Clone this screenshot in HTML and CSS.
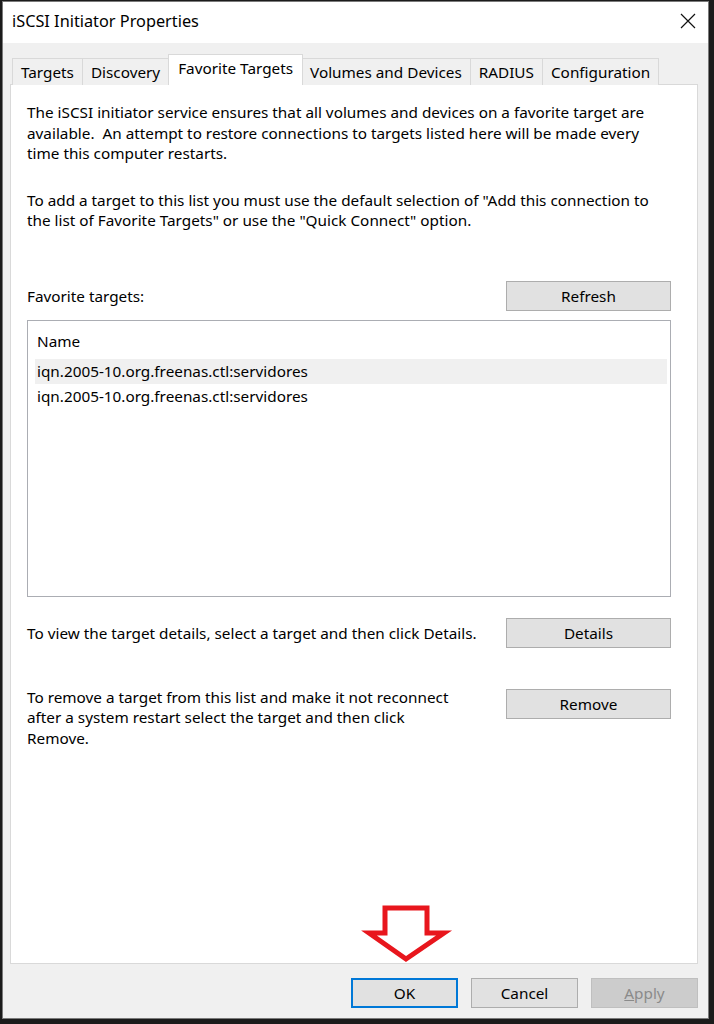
FILE: index.html
```html
<!DOCTYPE html>
<html>
<head>
<meta charset="utf-8">
<link rel="stylesheet" href="styles.css">
</head>
<body>
<div class="window">
  <div class="titlebar">
    <span class="title">iSCSI Initiator Properties</span>
    <svg class="close" width="16" height="16" viewBox="0 0 16 16"><path d="M1 1L15 15M15 1L1 15" stroke="#111" stroke-width="1.2" fill="none"/></svg>
  </div>
  <div class="content">
    <div class="tabs">
      <div class="tab">Targets</div>
      <div class="tab">Discovery</div>
      <div class="tab active">Favorite Targets</div>
      <div class="tab">Volumes and Devices</div>
      <div class="tab">RADIUS</div>
      <div class="tab">Configuration</div>
    </div>
    <div class="panel">
      <p class="para">The iSCSI initiator service ensures that all volumes and devices on a favorite target are<br>available.&nbsp; An attempt to restore connections to targets listed here will be made every<br>time this computer restarts.</p>
      <p class="para second">To add a target to this list you must use the default selection of "Add this connection to<br>the list of Favorite Targets" or use the "Quick Connect" option.</p>
      <div class="row first-row">
        <span class="label">Favorite targets:</span>
        <button class="btn">Refresh</button>
      </div>
      <div class="list">
        <div class="list-head">Name</div>
        <div class="list-item selected">iqn.2005-10.org.freenas.ctl:servidores</div>
        <div class="list-item">iqn.2005-10.org.freenas.ctl:servidores</div>
      </div>
      <div class="row details-row">
        <span class="label">To view the target details, select a target and then click Details.</span>
        <button class="btn">Details</button>
      </div>
      <div class="row remove-row">
        <span class="label wrap">To remove a target from this list and make it not reconnect<br>after a system restart select the target and then click<br>Remove.</span>
        <button class="btn">Remove</button>
      </div>
    </div>
    <div class="footer">
      <button class="btn fbtn default">OK</button>
      <button class="btn fbtn">Cancel</button>
      <button class="btn fbtn disabled"><u>A</u>pply</button>
    </div>
  </div>
</div>
<svg class="arrow" width="94" height="66" viewBox="0 0 94 66">
  <polygon points="24,5 66,5 66,30 83,30 45,56 8,30 24,30" fill="#fff" stroke="#e8161d" stroke-width="5" stroke-linejoin="miter"/>
</svg>
</body>
</html>
```
FILE: styles.css
```css
*, *::before, *::after {
  box-sizing: border-box;
}
html, body {
  margin: 0;
  padding: 0;
}
body {
  background: #1b1b1b;
  width: 714px;
  height: 1024px;
  overflow: hidden;
  position: relative;
  font-family: "Noto Sans", "Open Sans", sans-serif;
  font-size: 15.3px;
  color: #000;
}
.window {
  margin: 1px 0 0 2px;
  width: 707px;
  height: 1018px;
  border: 1px solid #7a7a7a;
  background: #f0f0f0;
  display: flex;
  flex-direction: column;
}
.titlebar {
  height: 41px;
  background: #fff;
  display: flex;
  align-items: center;
  justify-content: space-between;
  padding: 0 12px 0 9px;
  flex: none;
}
.title {
  font-size: 16.3px;
  margin-top: -3px;
}
.close {
  margin-top: -3px;
}
.content {
  padding: 0 10px 0 7px;
  display: flex;
  flex-direction: column;
}
.tabs {
  display: flex;
  align-items: flex-end;
  margin-top: 11px;
  height: 31px;
  padding-left: 3px;
  position: relative;
  z-index: 1;
  margin-bottom: -1px;
}
.tab {
  height: 27px;
  line-height: 26px;
  border: 1px solid #d9d9d9;
  border-bottom: none;
  margin-left: -1px;
  padding: 0 8px;
  background: #f0f0f0;
  white-space: nowrap;
}
.tab.active {
  height: 31px;
  line-height: 27px;
  background: #fff;
  padding: 0 9px;
  margin-left: -1px;
  margin-right: -1px;
  position: relative;
}
.panel {
  height: 880px;
  background: #fff;
  border: 1px solid #d9d9d9;
  padding: 17px 26px 0 16px;
  display: flex;
  flex-direction: column;
}
.para {
  margin: 0;
  line-height: 20.5px;
  white-space: nowrap;
}
.para.second {
  margin-top: 26px;
}
.row {
  display: flex;
  justify-content: space-between;
  align-items: center;
}
.first-row {
  margin-top: 50px;
}
.details-row {
  margin-top: 21px;
}
.remove-row {
  margin-top: 41px;
  align-items: flex-start;
}
.label.wrap {
  line-height: 20.5px;
  margin-top: -2px;
  white-space: nowrap;
}
.btn {
  font-family: inherit;
  font-size: 15.3px;
  color: #000;
  width: 165px;
  height: 30px;
  background: #e1e1e1;
  border: 1px solid #adadad;
  padding: 0;
  margin: 0;
}
.list {
  margin-top: 9px;
  height: 277px;
  border: 1px solid #abadb3;
  padding: 0 3px 0 7px;
}
.list-head {
  height: 38px;
  line-height: 40px;
  padding-left: 2px;
}
.list-item {
  height: 25px;
  line-height: 25px;
  padding-left: 2px;
}
.list-item.selected {
  background: #f0f0f0;
}
.footer {
  display: flex;
  justify-content: flex-end;
  gap: 13px;
  margin-top: 14px;
}
.fbtn {
  width: 107px;
  height: 30px;
}
.fbtn.default {
  border: 2px solid #0078d7;
}
.fbtn.disabled {
  background: #cccccc;
  border-color: #bfbfbf;
  color: #8a8a8a;
}
.arrow {
  position: absolute;
  left: 361px;
  top: 903px;
}
```
